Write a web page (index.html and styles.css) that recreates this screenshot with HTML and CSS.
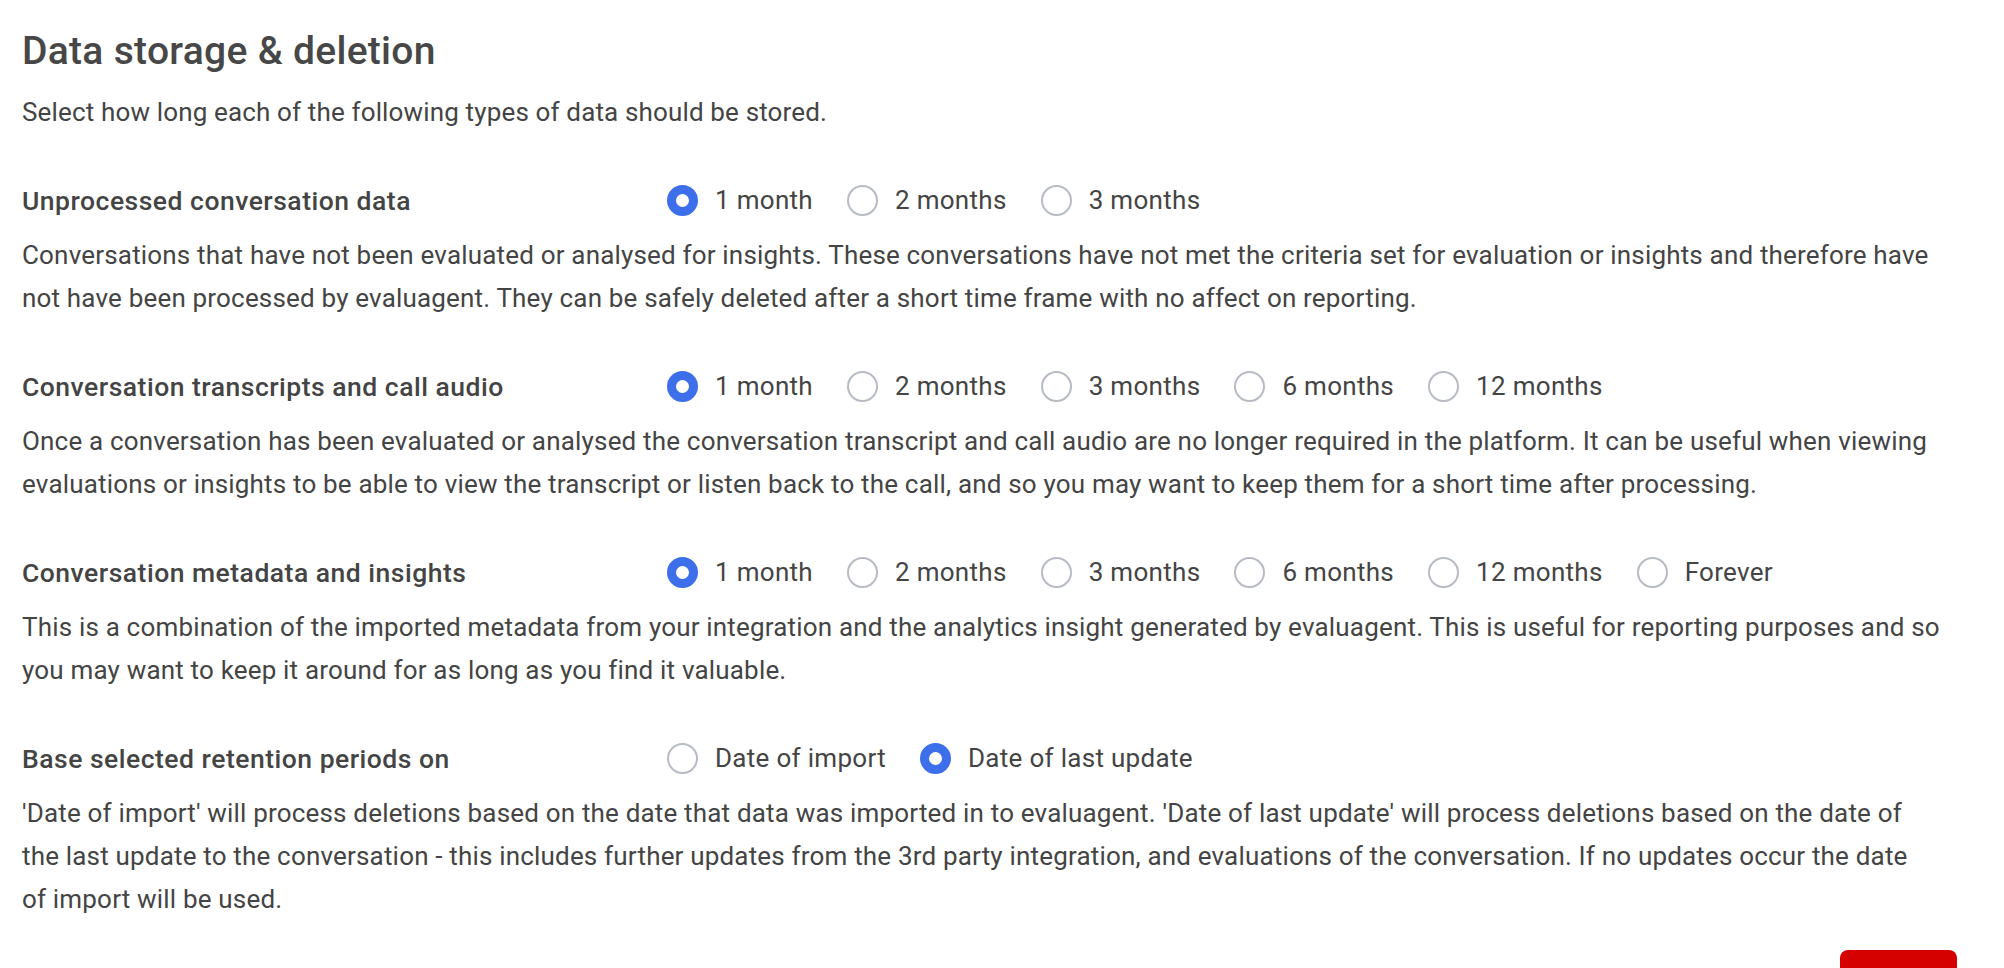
FILE: index.html
```html
<!DOCTYPE html>
<html lang="en">
<head>
<meta charset="utf-8">
<title>Data storage &amp; deletion</title>
<link rel="stylesheet" href="styles.css">
</head>
<body>
<main class="page">
  <h1 class="title">Data storage &amp; deletion</h1>
  <p class="intro">Select how long each of the following types of data should be stored.</p>

  <section class="setting">
    <div class="setting-head">
      <div class="setting-label">Unprocessed conversation data</div>
      <div class="options">
        <label class="option"><span class="radio checked"></span><span class="option-text">1 month</span></label>
        <label class="option"><span class="radio"></span><span class="option-text">2 months</span></label>
        <label class="option"><span class="radio"></span><span class="option-text">3 months</span></label>
      </div>
    </div>
    <p class="setting-desc">Conversations that have not been evaluated or analysed for insights. These conversations have not met the criteria set for evaluation or insights and therefore have<br>not have been processed by evaluagent. They can be safely deleted after a short time frame with no affect on reporting.</p>
  </section>

  <section class="setting">
    <div class="setting-head">
      <div class="setting-label">Conversation transcripts and call audio</div>
      <div class="options">
        <label class="option"><span class="radio checked"></span><span class="option-text">1 month</span></label>
        <label class="option"><span class="radio"></span><span class="option-text">2 months</span></label>
        <label class="option"><span class="radio"></span><span class="option-text">3 months</span></label>
        <label class="option"><span class="radio"></span><span class="option-text">6 months</span></label>
        <label class="option"><span class="radio"></span><span class="option-text">12 months</span></label>
      </div>
    </div>
    <p class="setting-desc">Once a conversation has been evaluated or analysed the conversation transcript and call audio are no longer required in the platform. It can be useful when viewing<br>evaluations or insights to be able to view the transcript or listen back to the call, and so you may want to keep them for a short time after processing.</p>
  </section>

  <section class="setting">
    <div class="setting-head">
      <div class="setting-label">Conversation metadata and insights</div>
      <div class="options">
        <label class="option"><span class="radio checked"></span><span class="option-text">1 month</span></label>
        <label class="option"><span class="radio"></span><span class="option-text">2 months</span></label>
        <label class="option"><span class="radio"></span><span class="option-text">3 months</span></label>
        <label class="option"><span class="radio"></span><span class="option-text">6 months</span></label>
        <label class="option"><span class="radio"></span><span class="option-text">12 months</span></label>
        <label class="option"><span class="radio"></span><span class="option-text">Forever</span></label>
      </div>
    </div>
    <p class="setting-desc">This is a combination of the imported metadata from your integration and the analytics insight generated by evaluagent. This is useful for reporting purposes and so<br>you may want to keep it around for as long as you find it valuable.</p>
  </section>

  <section class="setting">
    <div class="setting-head">
      <div class="setting-label">Base selected retention periods on</div>
      <div class="options">
        <label class="option"><span class="radio"></span><span class="option-text">Date of import</span></label>
        <label class="option"><span class="radio checked"></span><span class="option-text">Date of last update</span></label>
      </div>
    </div>
    <p class="setting-desc">'Date of import' will process deletions based on the date that data was imported in to evaluagent. 'Date of last update' will process deletions based on the date of<br>the last update to the conversation - this includes further updates from the 3rd party integration, and evaluations of the conversation. If no updates occur the date<br>of import will be used.</p>
  </section>

  <div class="actions">
    <button class="save-btn" type="button">Save</button>
  </div>
</main>
</body>
</html>
```

FILE: styles.css
```css
html, body {
  margin: 0;
  padding: 0;
  background: #ffffff;
}

body {
  font-family: Roboto, "Liberation Sans", Arial, sans-serif;
  color: #444444;
  overflow: hidden;
}

.page {
  width: 1935px;
  padding: 29px 0 0 22px;
}

.title {
  margin: 0;
  font-size: 39px;
  line-height: 44px;
  font-weight: 500;
  color: #474747;
  letter-spacing: 0.3px;
}

.intro {
  margin: 18px 0 0;
  font-size: 26px;
  line-height: 43px;
  letter-spacing: 0.15px;
}

.setting {
  margin-top: 45px;
}

.setting-head {
  display: grid;
  grid-template-columns: 645px 1fr;
  align-items: center;
  height: 43px;
}

.setting-label {
  font-size: 26.5px;
  font-weight: 500;
  line-height: 43px;
  letter-spacing: 0.5px;
}

.options {
  display: flex;
  align-items: center;
  gap: 34px;
}

.option {
  display: flex;
  align-items: center;
  gap: 17px;
  font-size: 26px;
  line-height: 43px;
  letter-spacing: 0.3px;
  cursor: pointer;
}

.radio {
  box-sizing: border-box;
  width: 31px;
  height: 31px;
  border-radius: 50%;
  border: 2px solid #b6bbc4;
  background: #ffffff;
  flex: none;
}

.radio.checked {
  border: 9px solid #3c6fe9;
  background: #ffffff;
}

.setting-desc {
  margin: 12px 0 0;
  font-size: 26px;
  line-height: 43px;
  letter-spacing: 0.18px;
}

.actions {
  display: flex;
  justify-content: flex-end;
  margin-top: 29px;
}

.save-btn {
  width: 117px;
  height: 64px;
  border: none;
  border-radius: 8px;
  background: #d50000;
  color: #ffffff;
  font-family: inherit;
  font-size: 22px;
}
```
